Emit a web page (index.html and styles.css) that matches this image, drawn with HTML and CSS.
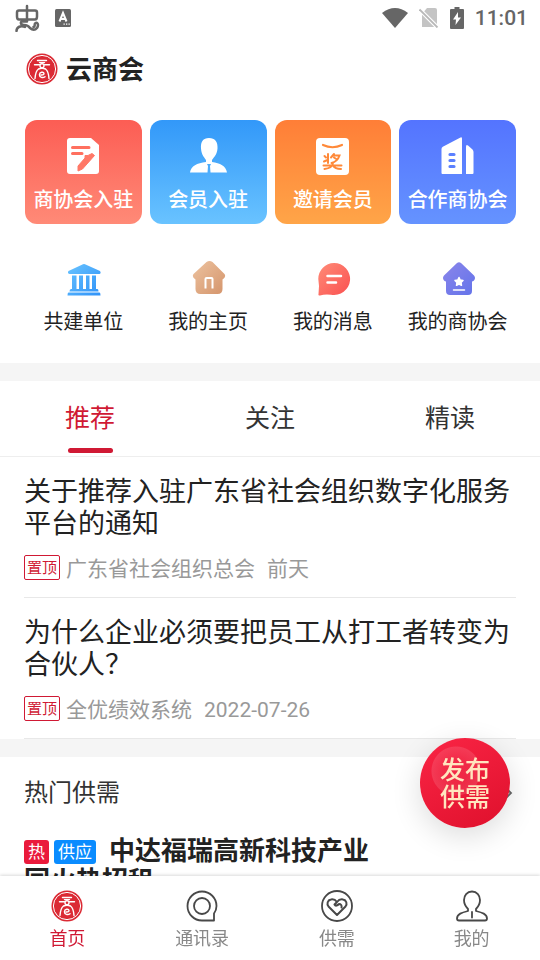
FILE: index.html
```html
<!DOCTYPE html>
<html lang="zh-CN">
<head>
<meta charset="utf-8">
<meta name="viewport" content="width=device-width, initial-scale=1">
<title>云商会</title>
<link rel="stylesheet" href="styles.css">
</head>
<body>
<svg class="defs" aria-hidden="true">
  <defs>
    <linearGradient id="g-red" x1="0" y1="0" x2="1" y2="1"><stop offset="0" stop-color="#ff8c78"/><stop offset="1" stop-color="#fa5050"/></linearGradient>
    <linearGradient id="g-blue" x1="0" y1="0" x2="1" y2="1"><stop offset="0" stop-color="#69c4ff"/><stop offset="1" stop-color="#2f92f8"/></linearGradient>
    <linearGradient id="g-tan" x1="0" y1="0" x2="1" y2="1"><stop offset="0" stop-color="#edc3a0"/><stop offset="1" stop-color="#d4946b"/></linearGradient>
    <linearGradient id="g-violet" x1="0" y1="0" x2="1" y2="1"><stop offset="0" stop-color="#8b86ea"/><stop offset="1" stop-color="#6373ea"/></linearGradient>
    <symbol id="seal" viewBox="0 0 32 32">
      <circle cx="16" cy="16" r="15.5" fill="#db2a34"/>
      <circle cx="16" cy="16" r="13.600" fill="none" stroke="#fff" stroke-width="1"/>
      <g fill="none" stroke="#fff" stroke-width="1.400" stroke-linecap="round">
        <path d="M11.500 7.500h9M8.500 11.800h5M18.500 11.800h5M13.500 9.600h5"/>
        <circle cx="16" cy="12.800" r="2"/>
        <path d="M12.500 16C9.800 18 9.300 21 9 25.500M19.500 16c2.700 2 3.200 5 3.500 9.500M12.500 16q3.500-1.500 7 0"/>
        <path d="M15 22q3.200.2 3-1.600c-.4-1.900-4.400-1.600-4.600 1.300 0 2.800 3.500 3.600 5.600 2"/>
      </g>
    </symbol>
  </defs>
</svg>

<div class="status">
  <div class="status-group">
    <svg width="26" height="28" viewBox="0 0 26 28" fill="none" stroke="#666" stroke-width="2.500" stroke-linecap="round" stroke-linejoin="round"><path d="M5 6.500h16q2 0 2 2v4q0 3-2 3H5q-2 0-2-3v-4q0-2 2-2zM13 2v15.500H8.500q-2 0-1.500 2 .5 1.500 3 1.500 4 0 6 3 4 3.500 7 0c2-3 .5-6-1.500-5s.5 3.500-2 4M2.500 27c0-4 4.500-6 8.500-4"/></svg>
    <svg width="16" height="18" viewBox="0 0 16 18"><rect width="16" height="18" rx="1.500" fill="#666"/><path d="M4.500 12.500 8 4l3.500 8.500M6 10h4" fill="none" stroke="#fff" stroke-width="2"/><path d="M8.500 15.200h1.300M11 15.200h1.300M13.500 15.200h1.300" stroke="#fff" stroke-width="1.300"/></svg>
  </div>
  <div class="status-group status-right">
    <svg width="26" height="20" viewBox="0 0 26 20"><path d="M0 5Q13-5 26 5L13 20z" fill="#666"/></svg>
    <svg width="20" height="20" viewBox="0 0 20 20"><path d="M8 0h8q2 0 2 2v17H3V6z" fill="#c4c4c4"/><path d="M.5 1.500 18.500 19.500" stroke="#fff" stroke-width="4"/><path d="M.5 1.500 18.500 19.500" stroke="#b8b8b8" stroke-width="1.800"/></svg>
    <svg width="14" height="22" viewBox="0 0 14 22"><path d="M4.500 0h5v2H13q1 0 1 1v18q0 1-1 1H1q-1 0-1-1V3q0-1 1-1h3.500z" fill="#666"/><path d="M8 5 3 12.500h3L5.500 18 11 10.500H8z" fill="#fff"/></svg>
    <span class="clock">11:01</span>
  </div>
</div>

<header class="brand">
  <svg width="32" height="32"><use href="#seal"/></svg>
  <h1>云商会</h1>
</header>

<main>
  <section class="quick">
    <a class="card card-red" href="#">
      <svg width="40" height="40" viewBox="0 0 40 40"><path d="M7 2h21l8 7v26q0 3-3 3H7q-3 0-3-3V5q0-3 3-3z" fill="#fff"/><path d="M9.500 11.500H26M9.500 17.500H19" stroke="#ff705f" stroke-width="3" stroke-linecap="round"/><path d="m29 17.500 2.500 2L19.500 33l-4.500 2v-5l7-8v-2.500h3z" fill="#ff7867" stroke="#ff7867" stroke-linejoin="round"/></svg>
      <span>商协会入驻</span>
    </a>
    <a class="card card-blue" href="#">
      <svg width="40" height="40" viewBox="0 0 40 40" fill="#fff"><path d="M21 2c6 0 9 4 8.500 10.500C29 19 26 21 24 24v2c8 1 14 4 15 10.500H22.500L22 30l1-2h-4l1 2-.5 6.500H2C3 30 9 27 18 26v-2c-2-3-4.500-5-5-11.500C12.500 6 15 2 21 2z"/></svg>
      <span>会员入驻</span>
    </a>
    <a class="card card-orange" href="#">
      <svg width="40" height="40" viewBox="0 0 40 40"><rect x="3" y="2" width="33" height="37" rx="4" fill="#fff"/><g fill="none" stroke="#ff8939" stroke-width="2.200" stroke-linecap="round"><path d="M10 9q9.500 4.500 19 0"/><path stroke-width="2" d="M15 18v9M11.500 20l1.500 1.500M11 25.500l3.500-1.500M21 18l-3 3.500M20.500 19.500h6q-2 6-8 7.500M21 21.500l3 2M10.500 29.500h18M20 27c-.5 4-4 5.500-8.500 6M20 29.500q2 3.500 8 3.500"/></g></svg>
      <span>邀请会员</span>
    </a>
    <a class="card card-indigo" href="#">
      <svg width="40" height="40" viewBox="0 0 40 40" fill="#fff"><path d="M3.500 13q0-1.500 1.300-2.200L22 1.700q2-1 2 1V38H4.500q-1 0-1-1zM28 11q0-3 2-1.500l4.500 4q1 1 1 2.500v21q0 1-1 1H28z"/><path d="M12 18.500h4M12 24.500h4M12 30.500h4" stroke="#5b80ff" stroke-width="3.200" stroke-linecap="round"/></svg>
      <span>合作商协会</span>
    </a>
  </section>

  <section class="shortcuts">
    <a href="#">
      <svg width="36" height="38" viewBox="0 0 36 38" fill="url(#g-blue)"><path d="M18 4.200q1-.5 2 0L35 11q1.500 2.500-.5 3h-30Q2 13.500 3.500 11zM7 15.500h4.500V29H14V15.500h4V29h3V15.500h3.500V29H27V15.500h4V29h1.500q1 0 1 2.500h-29Q4.500 29 6 29h1zM3.500 32.500h31q1 0 1 3h-33q0-3 1-3z"/></svg>
      <span>共建单位</span>
    </a>
    <a href="#">
      <svg width="36" height="38" viewBox="0 0 36 38"><path d="M16.500 2q3-2 6 0l12 12q2 3-2 5.500V29q0 5-5 5h-17q-5 0-5-5v-9.500q-4-2.500-2-5.500z" fill="url(#g-tan)"/><path d="M15.500 28.500V19q0-1 1-1h5q1 0 1 1v9.500" fill="none" stroke="#fff" stroke-width="2"/></svg>
      <span>我的主页</span>
    </a>
    <a href="#">
      <svg width="36" height="38" viewBox="0 0 36 38"><path d="M19 3a16 16 0 1 1-3 31.700q-6-.8-11 .7-2 .5-1.500-1.500L4 26l-.7-7A16 16 0 0 1 19 3z" fill="url(#g-red)"/><path d="M12.500 16H26M12.500 22.500h8.500" stroke="#fff" stroke-width="2.500" stroke-linecap="round"/></svg>
      <span>我的消息</span>
    </a>
    <a href="#">
      <svg width="36" height="38" viewBox="0 0 36 38"><path d="M17 3q2-1.500 4 0l13 12.500q2 2.500 0 5-1 1-2 1V31q0 4-4 4H10q-4 0-4-4v-9.500q-1 0-2-1-2-2.500 0-5z" fill="url(#g-violet)"/><path d="m19 17.500 1.200 2.500 2.800.4-2 2 .5 2.900-2.500-1.300-2.500 1.300.5-2.900-2-2 2.800-.4z" fill="#fff" stroke="#fff" stroke-width="1.500" stroke-linejoin="round"/><path d="M13.500 30h11" stroke="#fff" stroke-width="1.500" stroke-linecap="round"/></svg>
      <span>我的商协会</span>
    </a>
  </section>

  <nav class="tabs">
    <button class="tab active" type="button">推荐</button>
    <button class="tab" type="button">关注</button>
    <button class="tab" type="button">精读</button>
  </nav>

  <section class="feed">
    <article>
      <h2>关于推荐入驻广东省社会组织数字化服务平台的通知</h2>
      <p class="meta"><span class="pin">置顶</span><span class="source">广东省社会组织总会</span><time>前天</time></p>
    </article>
    <article>
      <h2>为什么企业必须要把员工从打工者转变为合伙人？</h2>
      <p class="meta"><span class="pin">置顶</span><span class="source">全优绩效系统</span><time>2022-07-26</time></p>
    </article>
  </section>

  <section class="market">
    <div class="market-head">
      <h2>热门供需</h2>
      <svg width="8" height="12" viewBox="0 0 8 12" fill="none" stroke="#666" stroke-width="1.800"><path d="m1 1 5 5-5 5"/></svg>
    </div>
    <h3><span class="tag tag-hot">热</span><span class="tag tag-supply">供应</span>中达福瑞高新科技产业园火热招租</h3>
  </section>
</main>

<button class="publish" type="button"><span>发布</span><span>供需</span></button>

<nav class="bottom">
  <a class="active" href="#">
    <svg width="32" height="32"><use href="#seal"/></svg>
    <span>首页</span>
  </a>
  <a href="#">
    <svg width="32" height="32" viewBox="0 0 32 32" fill="none" stroke="#484848" stroke-width="1.800" stroke-linejoin="round"><path d="M16 30.500a14.500 14.500 0 1 1 14.500-14.500q0 4-2.500 7.500v7z"/><circle cx="16" cy="16" r="8"/></svg>
    <span>通讯录</span>
  </a>
  <a href="#">
    <svg width="32" height="32" viewBox="0 0 32 32" fill="none" stroke="#484848" stroke-width="1.800" stroke-linecap="round" stroke-linejoin="round"><circle cx="16" cy="16" r="15"/><path stroke-width="2" d="m16 25-8.500-8.500c-2-2.500-1-6.500 2.500-7 2.500-.5 4.500.5 6 2.500 1.500-2 3.500-3 6-2.500 3.500.5 4.500 4.500 2.500 7zM16 12l-2.500 2.500c1 2 3 1 4.500-.5 2 0 3 1.500 2.500 3.500"/></svg>
    <span>供需</span>
  </a>
  <a href="#">
    <svg width="32" height="32" viewBox="0 0 32 32" fill="none" stroke="#484848" stroke-width="1.800" stroke-linecap="round" stroke-linejoin="round"><path d="M16 1.500c5 0 8 4 8 8.500 0 4-2 7-4 9v2c6 1.500 11 3 11 7.500 0 1.500-.5 2-2 2H3c-1.500 0-2-.5-2-2C1 24 6 22.500 12 21v-2c-2-2-4-5-4-9 0-4.500 3-8.500 8-8.500z"/><path d="M16 22v5.500"/></svg>
    <span>我的</span>
  </a>
</nav>
</body>
</html>
```
FILE: styles.css
```css
* {
  box-sizing: border-box;
  margin: 0;
  padding: 0;
}

body {
  display: flex;
  flex-direction: column;
  height: 100vh;
  overflow: hidden;
  background: #fff;
  color: #222;
  font-family: Roboto, "Noto Sans CJK SC", sans-serif;
}

a {
  color: inherit;
  text-decoration: none;
}

button {
  border: 0;
  background: none;
  font-family: inherit;
}

svg {
  display: block;
  flex: none;
}

.defs {
  position: absolute;
  width: 0;
  height: 0;
}

.status {
  display: flex;
  flex: none;
  justify-content: space-between;
  align-items: center;
  height: 36px;
  padding: 0 12px 0 14px;
}

.status-group {
  display: flex;
  align-items: center;
  gap: 15px;
}

.status-right {
  gap: 11px;
}

.clock {
  color: #666;
  font-size: 21px;
  font-weight: 500;
  line-height: 24px;
}

.brand {
  display: flex;
  flex: none;
  align-items: center;
  gap: 8px;
  height: 66px;
  padding: 0 26px;
}

.brand h1 {
  padding-top: 2px;
  font-size: 26px;
  font-weight: 700;
  line-height: 36px;
}

main {
  flex: 1;
  min-height: 0;
  overflow: hidden;
}

.quick,
.shortcuts {
  display: grid;
  grid-template-columns: repeat(4, 1fr);
  gap: 8px;
  padding: 0 24px 0 25px;
}

.quick {
  padding-top: 18px;
}

.card {
  display: flex;
  flex-direction: column;
  align-items: center;
  gap: 9px;
  height: 104px;
  padding-top: 16px;
  border-radius: 12px;
  color: #fff;
  font-size: 20px;
  font-weight: 500;
  line-height: 30px;
  white-space: nowrap;
}

.card-red {
  background: linear-gradient(#fc5d54, #ff8a77);
}

.card-blue {
  background: linear-gradient(#3298f9, #69c3ff);
}

.card-orange {
  background: linear-gradient(#ff7e37, #ffa548);
}

.card-indigo {
  background: linear-gradient(#5474ff, #6593ff);
}

.shortcuts {
  padding-top: 36px;
  padding-bottom: 26px;
  font-size: 20px;
  line-height: 30px;
  white-space: nowrap;
}

.shortcuts a {
  display: flex;
  flex-direction: column;
  align-items: center;
  gap: 9px;
}

.tabs {
  display: grid;
  grid-template-columns: repeat(3, 1fr);
  border-top: 18px solid #f5f5f5;
  border-bottom: 1px solid #eee;
}

.tab {
  display: flex;
  flex-direction: column;
  align-items: center;
  gap: 11px;
  height: 75px;
  padding-top: 19px;
  color: #333;
  font-size: 25px;
  line-height: 37px;
}

.tab::after {
  width: 45px;
  height: 5px;
  border-radius: 3px;
  content: "";
}

.tab.active {
  color: #d01934;
}

.tab.active::after {
  background: #d01934;
}

.feed {
  padding: 0 24px;
}

.feed article {
  padding: 19px 0 17px;
  border-bottom: 1px solid #e8e8e8;
}

.feed h2 {
  font-size: 27px;
  font-weight: 400;
  line-height: 32px;
}

.meta {
  display: flex;
  align-items: center;
  margin-top: 15px;
  color: #999;
  font-size: 21px;
  line-height: 25px;
}

.source,
.meta time {
  height: 25px;
  line-height: 28px;
}

.pin {
  padding: 1px 2px 0;
  border: 1px solid #d01934;
  border-radius: 2px;
  color: #d01934;
  font-size: 15px;
  line-height: 22px;
}

.source {
  margin: 0 12px 0 6px;
}

.market {
  padding: 18px 24px 0;
  border-top: 18px solid #f5f5f5;
}

.market-head {
  display: flex;
  justify-content: space-between;
  align-items: center;
  padding-right: 3px;
}

.market-head h2 {
  color: #333;
  font-size: 24px;
  font-weight: 400;
  line-height: 36px;
}

.market h3 {
  width: 72%;
  margin-top: 25px;
  font-size: 26px;
  font-weight: 700;
  line-height: 30px;
}

.tag {
  display: inline-block;
  margin-right: 5px;
  padding: 0 4px;
  border-radius: 3px;
  color: #fff;
  font-size: 17px;
  font-weight: 400;
  line-height: 24px;
  vertical-align: 2px;
}

.tag-hot {
  background: #ea1a3c;
}

.tag-supply {
  margin-right: 13px;
  background: #0a8cff;
}

.publish {
  position: fixed;
  right: 30px;
  bottom: 132px;
  display: flex;
  flex-direction: column;
  align-items: center;
  justify-content: center;
  width: 90px;
  height: 90px;
  padding-top: 2px;
  border-radius: 50%;
  background:
    radial-gradient(circle at 36px 33px, rgba(255, 255, 255, 0.06) 12px, rgba(255, 255, 255, 0.12) 24px, transparent 25px),
    linear-gradient(150deg, #fa2545, #df102c);
  box-shadow: 0 8px 30px rgba(0, 0, 0, 0.14);
  color: #ffe6bf;
  font-size: 25px;
  font-weight: 500;
  line-height: 27px;
}

.bottom {
  z-index: 1;
  display: grid;
  flex: none;
  grid-template-columns: repeat(4, 1fr);
  padding: 14px 1px 8px 0;
  background: #fff;
  box-shadow: 0 -1px 3px rgba(0, 0, 0, 0.15);
  color: #888;
  font-size: 18px;
  line-height: 26px;
}

.bottom a {
  display: flex;
  flex-direction: column;
  align-items: center;
  gap: 4px;
}

.bottom .active {
  color: #d01934;
}
```
